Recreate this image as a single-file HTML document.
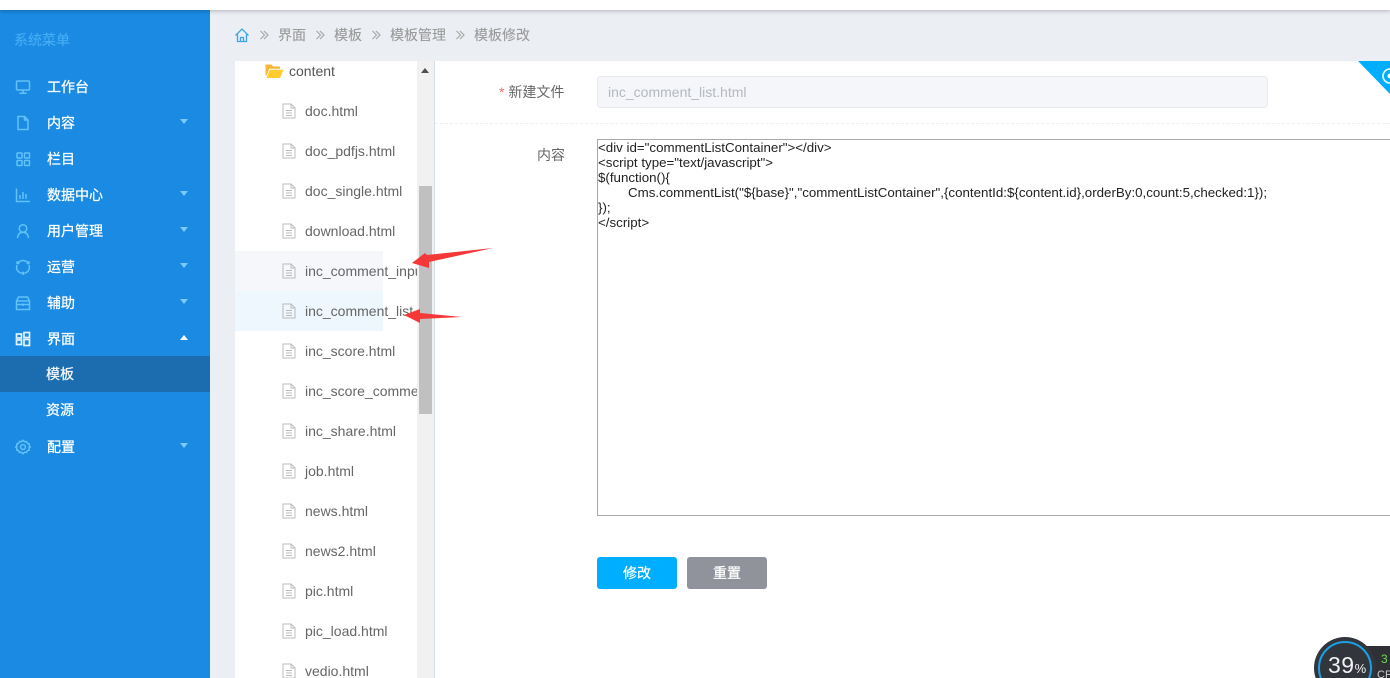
<!DOCTYPE html>
<html lang="zh">
<head>
<meta charset="utf-8">
<style>
html,body{margin:0;padding:0;width:1390px;height:678px;overflow:hidden;background:#fff}
body{position:relative;font-family:"Liberation Sans","Noto Sans CJK SC",sans-serif;font-size:14px}
.a{position:absolute;white-space:nowrap}
.side{left:0;top:10px;width:210px;height:668px;background:#1a8ae3}
.mi{left:47px;width:120px;height:36px;line-height:36px;color:#fff;font-size:14px;-webkit-text-stroke:.25px #fff}
.tri{position:absolute;left:180px;width:0;height:0;border-left:4px solid transparent;border-right:4px solid transparent;border-top:5px solid #7cc8f8}
.ic{position:absolute;left:15px;width:16px;height:16px;fill:none;stroke:#62c1f7;stroke-width:1.5}
.f{left:305px;height:40px;line-height:40px;color:#666;font-size:14px}
.fi{position:absolute;left:281px;width:16px;height:16px;fill:none;stroke:#bbb;stroke-width:1}
.bc{top:25px;line-height:20px;color:#999;font-size:14px;-webkit-text-stroke:.1px #999}
.chev{fill:none;stroke:#a8a8a8;stroke-width:1.2}
.btn{top:557px;width:80px;height:32px;line-height:32px;border-radius:3px;color:#fff;text-align:center;font-size:14px;-webkit-text-stroke:.25px #fff}
</style>
</head>
<body>
<div class="a" style="left:0;top:0;width:1390px;height:10px;background:#fff;box-shadow:0 1px 4px rgba(0,0,0,.25);z-index:3"></div>
<div class="a" style="left:210px;top:10px;width:1180px;height:668px;background:#ebeef3"></div>

<!-- Sidebar -->
<div class="a side"></div>
<div class="a" style="left:14px;top:31px;font-size:14px;line-height:18px;color:#45acf3;-webkit-text-stroke:.2px #45acf3">系统菜单</div>

<svg class="ic" style="top:79px" viewBox="0 0 16 16"><rect x="1.500" y="2" width="13" height="9" rx="1"/><path d="M8 11v3M4.500 14.200h7"/></svg>
<div class="a mi" style="top:69px">工作台</div>

<svg class="ic" style="top:115px" viewBox="0 0 16 16"><path d="M3 1.500h6.500L13 5v9.500H3zM9.500 1.500V5H13"/></svg>
<div class="a mi" style="top:105px">内容</div><div class="tri" style="top:119px"></div>

<svg class="ic" style="top:151px" viewBox="0 0 16 16"><rect x="2" y="2" width="5" height="5" rx=".6"/><rect x="9.500" y="2" width="5" height="5" rx=".6"/><rect x="2" y="9.500" width="5" height="5" rx=".6"/><rect x="9.500" y="9.500" width="5" height="5" rx=".6"/></svg>
<div class="a mi" style="top:141px">栏目</div>

<svg class="ic" style="top:187px" viewBox="0 0 16 16"><path d="M1.500 1.500v13h13.500M5 12V8M8 12V5M11 12V7"/></svg>
<div class="a mi" style="top:177px">数据中心</div><div class="tri" style="top:191px"></div>

<svg class="ic" style="top:223px" viewBox="0 0 16 16"><circle cx="8" cy="5.500" r="3.800"/><path d="M2.500 15c.5-4 2.500-5.700 5.500-5.700s5 1.700 5.500 5.700"/></svg>
<div class="a mi" style="top:213px">用户管理</div><div class="tri" style="top:227px"></div>

<svg class="ic" style="top:259px" viewBox="0 0 16 16"><path d="M4 3a6 6 0 0 1 8 0M14 6a6 6 0 0 1-4 8M6 14a6 6 0 0 1-4-8"/><circle cx="2.800" cy="3.800" r=".9"/><circle cx="13.200" cy="3.800" r=".9"/><circle cx="8" cy="14.300" r=".9"/></svg>
<div class="a mi" style="top:249px">运营</div><div class="tri" style="top:263px"></div>

<svg class="ic" style="top:295px" viewBox="0 0 16 16"><path d="M1.500 6h13v8.500h-13zM1.500 6l2-4h9l2 4M8 8.500v2.500"/><path d="M1.500 9.500h13"/></svg>
<div class="a mi" style="top:285px">辅助</div><div class="tri" style="top:299px"></div>

<svg class="ic" style="top:331px;stroke:#e4f3fd;stroke-width:1.700" viewBox="0 0 16 16"><rect x="1.500" y="3" width="5" height="4"/><rect x="1.500" y="9" width="5" height="4.500"/><rect x="9" y="1.500" width="5.500" height="5"/><rect x="9" y="8.500" width="5.500" height="6"/></svg>
<div class="a mi" style="top:321px">界面</div>
<div class="a" style="left:180px;top:335px;width:0;height:0;border-left:4px solid transparent;border-right:4px solid transparent;border-bottom:5px solid #fff"></div>

<div class="a" style="left:0;top:356px;width:210px;height:36px;background:#1c6db0"></div>
<div class="a mi" style="left:46px;top:356px;color:#f1f6fa">模板</div>
<div class="a mi" style="left:46px;top:392px">资源</div>

<svg class="ic" style="top:439px" viewBox="0 0 16 16"><path d="M8 1.300l1.500 1.400 2-.2.900 1.800 1.900.7-.2 2 1.200 1-1.200 1 .2 2-1.900.7-.9 1.800-2-.2L8 14.700l-1.500-1.400-2 .2-.9-1.800-1.900-.7.2-2L.7 8l1.200-1-.2-2 1.900-.7.900-1.800 2 .2z"/><circle cx="8" cy="8" r="2.400"/></svg>
<div class="a mi" style="top:429px">配置</div><div class="tri" style="top:443px"></div>

<!-- Breadcrumb -->
<svg class="a" style="left:235px;top:28px;fill:none;stroke:#3da5ea;stroke-width:1.300" width="14" height="15" viewBox="0 0 14 15"><path d="M.5 7.500L7 1l6.500 6.500M2.500 6v7.500h9V6M5.500 13.500V9.500h3v4"/></svg>
<svg class="a chev" style="left:260px;top:30px" width="9" height="10" viewBox="0 0 9 10"><path d="M.5 1l4 4-4 4M4 1l4 4-4 4"/></svg>
<div class="a bc" style="left:278px">界面</div>
<svg class="a chev" style="left:316px;top:30px" width="9" height="10" viewBox="0 0 9 10"><path d="M.5 1l4 4-4 4M4 1l4 4-4 4"/></svg>
<div class="a bc" style="left:334px">模板</div>
<svg class="a chev" style="left:372px;top:30px" width="9" height="10" viewBox="0 0 9 10"><path d="M.5 1l4 4-4 4M4 1l4 4-4 4"/></svg>
<div class="a bc" style="left:390px">模板管理</div>
<svg class="a chev" style="left:456px;top:30px" width="9" height="10" viewBox="0 0 9 10"><path d="M.5 1l4 4-4 4M4 1l4 4-4 4"/></svg>
<div class="a bc" style="left:474px">模板修改</div>

<!-- Tree panel -->
<div class="a" style="left:235px;top:61px;width:182px;height:617px;background:#fff"></div>
<div class="a" style="left:235px;top:251px;width:148px;height:40px;background:#f5f7fa"></div>
<div class="a" style="left:235px;top:291px;width:148px;height:40px;background:#eef6fe"></div>
<svg class="a" style="left:265px;top:63px" width="19" height="16" viewBox="0 0 19 16"><path d="M.5 1.500h6l1.500 2h7v2.200H4.200L1.600 12.500H.5z" fill="#f7b733"/><path d="M4.800 6.800h13.700L15 15H1.500z" fill="#ffcb2f"/></svg>
<div class="a" style="left:289px;top:61px;line-height:20px;color:#555;font-size:14px">content</div>

<svg class="fi" style="top:103px" viewBox="0 0 16 16"><path d="M2 1h8l4 4v10H2zM10 1v4h4M5 7.500h6M5 10h6M5 12.500h6"/></svg><div class="a f" style="top:91px">doc.html</div>
<svg class="fi" style="top:143px" viewBox="0 0 16 16"><path d="M2 1h8l4 4v10H2zM10 1v4h4M5 7.500h6M5 10h6M5 12.500h6"/></svg><div class="a f" style="top:131px">doc_pdfjs.html</div>
<svg class="fi" style="top:183px" viewBox="0 0 16 16"><path d="M2 1h8l4 4v10H2zM10 1v4h4M5 7.500h6M5 10h6M5 12.500h6"/></svg><div class="a f" style="top:171px">doc_single.html</div>
<svg class="fi" style="top:223px" viewBox="0 0 16 16"><path d="M2 1h8l4 4v10H2zM10 1v4h4M5 7.500h6M5 10h6M5 12.500h6"/></svg><div class="a f" style="top:211px">download.html</div>
<svg class="fi" style="top:263px" viewBox="0 0 16 16"><path d="M2 1h8l4 4v10H2zM10 1v4h4M5 7.500h6M5 10h6M5 12.500h6"/></svg><div class="a f" style="top:251px;width:112px;overflow:hidden">inc_comment_input.html</div>
<svg class="fi" style="top:303px" viewBox="0 0 16 16"><path d="M2 1h8l4 4v10H2zM10 1v4h4M5 7.500h6M5 10h6M5 12.500h6"/></svg><div class="a f" style="top:291px;width:112px;overflow:hidden">inc_comment_list.html</div>
<svg class="fi" style="top:343px" viewBox="0 0 16 16"><path d="M2 1h8l4 4v10H2zM10 1v4h4M5 7.500h6M5 10h6M5 12.500h6"/></svg><div class="a f" style="top:331px">inc_score.html</div>
<svg class="fi" style="top:383px" viewBox="0 0 16 16"><path d="M2 1h8l4 4v10H2zM10 1v4h4M5 7.500h6M5 10h6M5 12.500h6"/></svg><div class="a f" style="top:371px;width:112px;overflow:hidden">inc_score_comment.html</div>
<svg class="fi" style="top:423px" viewBox="0 0 16 16"><path d="M2 1h8l4 4v10H2zM10 1v4h4M5 7.500h6M5 10h6M5 12.500h6"/></svg><div class="a f" style="top:411px">inc_share.html</div>
<svg class="fi" style="top:463px" viewBox="0 0 16 16"><path d="M2 1h8l4 4v10H2zM10 1v4h4M5 7.500h6M5 10h6M5 12.500h6"/></svg><div class="a f" style="top:451px">job.html</div>
<svg class="fi" style="top:503px" viewBox="0 0 16 16"><path d="M2 1h8l4 4v10H2zM10 1v4h4M5 7.500h6M5 10h6M5 12.500h6"/></svg><div class="a f" style="top:491px">news.html</div>
<svg class="fi" style="top:543px" viewBox="0 0 16 16"><path d="M2 1h8l4 4v10H2zM10 1v4h4M5 7.500h6M5 10h6M5 12.500h6"/></svg><div class="a f" style="top:531px">news2.html</div>
<svg class="fi" style="top:583px" viewBox="0 0 16 16"><path d="M2 1h8l4 4v10H2zM10 1v4h4M5 7.500h6M5 10h6M5 12.500h6"/></svg><div class="a f" style="top:571px">pic.html</div>
<svg class="fi" style="top:623px" viewBox="0 0 16 16"><path d="M2 1h8l4 4v10H2zM10 1v4h4M5 7.500h6M5 10h6M5 12.500h6"/></svg><div class="a f" style="top:611px">pic_load.html</div>
<svg class="fi" style="top:663px" viewBox="0 0 16 16"><path d="M2 1h8l4 4v10H2zM10 1v4h4M5 7.500h6M5 10h6M5 12.500h6"/></svg><div class="a f" style="top:651px">vedio.html</div>

<!-- Scrollbar -->
<div class="a" style="left:417px;top:61px;width:17px;height:617px;background:#f1f1f1"></div>
<div class="a" style="left:419px;top:186px;width:13px;height:228px;background:#c0c0c0"></div>
<div class="a" style="left:421px;top:68px;width:0;height:0;border-left:4px solid transparent;border-right:4px solid transparent;border-bottom:5px solid #505050"></div>
<div class="a" style="left:434px;top:61px;width:1px;height:617px;background:#d8dee6"></div>

<!-- Form panel -->
<div class="a" style="left:435px;top:61px;width:955px;height:617px;background:#fff"></div>
<div class="a" style="left:435px;top:123px;width:955px;height:0;border-top:1px dashed #edf0f3"></div>
<svg class="a" style="left:1358px;top:61px" width="32" height="33" viewBox="0 0 32 33"><path d="M0 0H32V33z" fill="#00aeff"/><circle cx="32" cy="15" r="7" fill="none" stroke="#fff" stroke-width="1.600"/><circle cx="32" cy="15" r="2.500" fill="#fff"/></svg>

<div class="a" style="left:499px;top:82px;line-height:20px;color:#666;font-size:14px"><span style="color:#f56c6c">* </span>新建文件</div>
<div class="a" style="left:597px;top:76px;width:669px;height:30px;line-height:30px;border:1px solid #e6e9ee;border-radius:4px;background:#f5f6fa;color:#b4b8c0;font-size:14px;text-indent:10px">inc_comment_list.html</div>

<div class="a" style="left:537px;top:145px;line-height:20px;color:#666;font-size:14px">内容</div>
<div class="a" style="left:597px;top:139px;width:800px;height:375px;border:1px solid #a9a9a9"></div>
<div class="a" style="left:598px;top:140px;font-size:13.333px;line-height:15px;color:#222;white-space:pre">&lt;div id="commentListContainer"&gt;&lt;/div&gt;
&lt;script type="text/javascript"&gt;
$(function(){
<span style="padding-left:30px">Cms.commentList("${base}","commentListContainer",{contentId:${content.id},orderBy:0,count:5,checked:1});</span>
});
&lt;/script&gt;</div>

<div class="a btn" style="left:597px;background:#00aeff">修改</div>
<div class="a btn" style="left:687px;background:#90939c">重置</div>

<!-- Red arrows -->
<svg class="a" style="left:400px;top:240px" width="95" height="90" viewBox="0 0 95 90"><path d="M12 23L25 13 27 15 93 8 29 22 29 28z" fill="#f43838"/><path d="M4 75L20 69 20 73 62 77 20 79 20 83z" fill="#f43838"/></svg>

<!-- CPU widget -->
<div class="a" style="left:1340px;top:646px;width:50px;height:32px;background:#2e3036"></div>
<div class="a" style="left:1381px;top:651px;color:#6fdc4a;font-size:12px;line-height:16px">3</div>
<div class="a" style="left:1377px;top:669px;color:#ccc;font-size:11px;line-height:13px">CP</div>
<div class="a" style="left:1314px;top:637px;width:62px;height:62px;border-radius:50%;background:#33353c;box-sizing:border-box"></div>
<div class="a" style="left:1318px;top:641px;width:54px;height:54px;border-radius:50%;border:2px solid #1ba0e2;box-sizing:border-box"></div>
<div class="a" style="left:1328px;top:652px;color:#f2f2f2;font-size:23px;line-height:26px;letter-spacing:.5px">39<span style="font-size:13px;letter-spacing:0">%</span></div>
</body>
</html>
